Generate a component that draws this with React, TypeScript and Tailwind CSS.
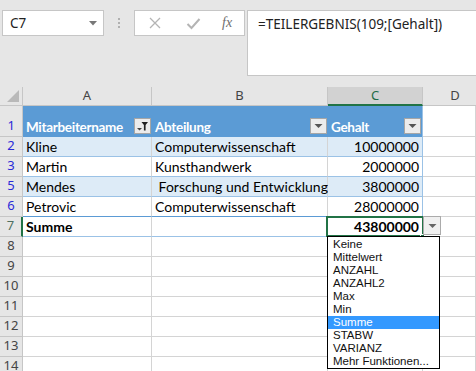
import React from 'react'

const rows = [
  { n: '2', a: 'Kline', b: 'Computerwissenschaft', c: '10000000', band: true },
  { n: '3', a: 'Martin', b: 'Kunsthandwerk', c: '2000000', band: false },
  { n: '5', a: 'Mendes', b: ' Forschung und Entwicklung', c: '3800000', band: true },
  { n: '6', a: 'Petrovic', b: 'Computerwissenschaft', c: '28000000', band: false },
]

const menu = ['Keine', 'Mittelwert', 'ANZAHL', 'ANZAHL2', 'Max', 'Min', 'Summe', 'STABW', 'VARIANZ', 'Mehr Funktionen...']

function FilterButton({ filtered }: { filtered?: boolean }) {
  return (
    <div className="w-[17px] h-[16px] bg-[#ececec] border border-[#a6a6a6] flex items-center justify-center shrink-0">
      {filtered ? (
        <svg width="13" height="12" viewBox="0 0 13 12">
          <path d="M1 8 H6 L3.5 10.5 Z" fill="#444" />
          <path d="M5.5 2 H12 L9.6 5 V10.5 H7.9 V5 Z" fill="#222" />
        </svg>
      ) : (
        <svg width="9" height="6" viewBox="0 0 9 6">
          <path d="M0.5 1 H8.5 L4.5 5 Z" fill="#555" />
        </svg>
      )}
    </div>
  )
}

function RowNum({ n, color = 'text-[#2a2ad8]', extra = '' }: { n: string; color?: string; extra?: string }) {
  return (
    <div
      className={`w-[23px] shrink-0 border-r border-b border-[#c6c6c6] bg-[#e6e6e6] flex items-end justify-center pb-[1px] text-[13px] font-['Noto_Sans',sans-serif] ${color} ${extra}`}
    >
      {n}
    </div>
  )
}

export default function App() {
  return (
    <div className="relative w-[476px] h-[371px] overflow-hidden bg-[#e6e6e6] font-['Lato',sans-serif] text-black">
      {/* formula bar area */}
      <div className="h-[87px] flex items-start pt-[10px] pl-[2px]">
        <div className="w-[102px] h-[26px] bg-white border border-[#c6c6c6] flex items-center justify-between pl-[7px] pr-[6px] font-['Noto_Sans',sans-serif] text-[13.5px] text-[#222]">
          <span>C7</span>
          <svg width="8" height="5" viewBox="0 0 8 5">
            <path d="M0 0 H8 L4 4.5 Z" fill="#777" />
          </svg>
        </div>
        <div className="w-[30px] h-[26px] flex flex-col items-center justify-center gap-[2px]">
          <span className="w-[2px] h-[2px] bg-[#b0b0b0]" />
          <span className="w-[2px] h-[2px] bg-[#b0b0b0]" />
          <span className="w-[2px] h-[2px] bg-[#b0b0b0]" />
        </div>
        <div className="w-[111px] h-[26px] bg-white border border-[#c6c6c6] flex items-center pl-[12px]">
          <svg width="14" height="14" viewBox="0 0 14 14" className="ml-[1px]">
            <path d="M2 2 L12 12 M12 2 L2 12" stroke="#b4b4b4" strokeWidth="1.3" />
          </svg>
          <svg width="15" height="13" viewBox="0 0 15 13" className="ml-[24px]">
            <path d="M1.5 7 L5.5 11 L13.5 2" stroke="#b4b4b4" strokeWidth="2" fill="none" />
          </svg>
          <span className="ml-[21px] font-['Liberation_Serif',serif] italic text-[14px] text-[#6e6e6e] leading-none">fx</span>
        </div>
        <div className="ml-[2px] flex-1 h-[66px] bg-white border border-[#c6c6c6] border-r-0 pl-[10px] pt-[3px] font-['Noto_Sans',sans-serif] text-[13.5px] text-[#222]">
          =TEILERGEBNIS(109;[Gehalt])
        </div>
      </div>

      {/* column headers */}
      <div className="flex h-[19px] font-['Noto_Sans',sans-serif] text-[13px] text-[#444]">
        <div className="w-[23px] shrink-0 border-r border-b border-[#c6c6c6] bg-[#e6e6e6] relative">
          <svg width="14" height="14" viewBox="0 0 14 14" className="absolute left-[6px] top-[2px]">
            <path d="M13 1 V13 H1 Z" fill="#b9b9b9" />
          </svg>
        </div>
        <div className="w-[129px] shrink-0 border-r border-b border-[#c6c6c6] flex items-center justify-center">A</div>
        <div className="w-[176px] shrink-0 border-r border-b border-[#c6c6c6] flex items-center justify-center">B</div>
        <div className="w-[95px] shrink-0 border-r border-[#c6c6c6] border-b-2 border-b-[#217346] bg-[#d2d2d2] flex items-center justify-center text-[#1f6b47]">
          C
        </div>
        <div className="flex-1 border-b border-[#c6c6c6] flex items-center justify-center pl-[11px]">D</div>
      </div>

      {/* row 1 : table header */}
      <div className="flex h-[31px] text-[13.5px] tracking-[-0.3px]">
        <RowNum n="1" />
        <div className="w-[129px] shrink-0 bg-[#5b9bd5] flex items-end justify-between pl-[3px] pr-[1px] pb-[3px] font-bold text-white">
          <span className="leading-[18px] mb-[-2px]">Mitarbeitername</span>
          <FilterButton filtered />
        </div>
        <div className="w-[176px] shrink-0 bg-[#5b9bd5] flex items-end justify-between pl-[3px] pr-[1px] pb-[3px] font-bold text-white">
          <span className="leading-[18px] mb-[-2px]">Abteilung</span>
          <FilterButton />
        </div>
        <div className="w-[95px] shrink-0 bg-[#5b9bd5] border-r border-[#9bc2e6] flex items-end justify-between pl-[3px] pr-[1px] pb-[3px] font-bold text-white">
          <span className="leading-[18px] mb-[-2px]">Gehalt</span>
          <FilterButton />
        </div>
        <div className="flex-1 bg-white border-b border-r border-[#d4d4d4]" />
      </div>

      {/* data rows */}
      {rows.map((r, i) => {
        const bottom = i === rows.length - 1 ? 'border-b-[#5b9bd5]' : 'border-b-[#9bc2e6]'
        const bg = r.band ? 'bg-[#ddebf7]' : 'bg-white'
        return (
          <div key={r.n} className="flex h-[20px] text-[14px]">
            <RowNum n={r.n} />
            <div className={`w-[129px] shrink-0 ${bg} border-b border-r border-r-[#d4d4d4] ${bottom} pl-[3px] flex items-end leading-[19px]`}>
              {r.a}
            </div>
            <div className={`w-[176px] shrink-0 ${bg} border-b border-r border-r-[#d4d4d4] ${bottom} pl-[3px] flex items-end leading-[19px] whitespace-pre`}>
              {r.b}
            </div>
            <div className={`w-[95px] shrink-0 ${bg} border-b border-r border-r-[#9bc2e6] ${bottom} pr-[3px] flex items-end justify-end leading-[19px]`}>
              {r.c}
            </div>
            <div className="flex-1 bg-white border-b border-r border-[#d4d4d4]" />
          </div>
        )
      })}

      {/* row 7 : totals */}
      <div className="flex h-[20px] text-[14px]">
        <RowNum n="7" color="text-[#4f7060]" extra="bg-[#d2d2d2] border-r-2 border-r-[#217346]" />
        <div className="w-[129px] shrink-0 bg-white border-b border-r border-r-[#d4d4d4] border-b-[#9bc2e6] pl-[3px] flex items-end leading-[19px] font-bold">
          Summe
        </div>
        <div className="w-[176px] shrink-0 bg-white border-b border-r border-r-[#d4d4d4] border-b-[#9bc2e6]" />
        <div className="relative w-[95px] shrink-0 bg-white border-b border-r border-r-[#9bc2e6] border-b-[#9bc2e6] pr-[3px] flex items-end justify-end leading-[19px] font-bold">
          43800000
          <div className="absolute -left-[2px] -top-[1px] -right-[2px] -bottom-[1px] border-2 border-[#217346]" />
          <div className="absolute -right-[3px] -bottom-[3px] w-[5px] h-[5px] bg-[#217346] border border-white" />
        </div>
        <div className="flex-1 bg-white border-b border-r border-[#d4d4d4]" />
      </div>

      {/* empty rows */}
      {['8', '9', '10', '11', '12', '13', '14'].map((n) => (
        <div key={n} className="flex h-[20px]">
          <RowNum n={n} color="text-[#444]" />
          <div className="w-[129px] shrink-0 bg-white border-b border-r border-[#d4d4d4]" />
          <div className="w-[176px] shrink-0 bg-white border-b border-r border-[#d4d4d4]" />
          <div className="w-[95px] shrink-0 bg-white border-b border-r border-[#d4d4d4]" />
          <div className="flex-1 bg-white border-b border-r border-[#d4d4d4]" />
        </div>
      ))}

      {/* totals dropdown button */}
      <div className="absolute left-[423px] top-[216px] w-[18px] h-[19px] bg-[#f0f0f0] border border-[#ababab] flex items-center justify-center">
        <svg width="9" height="6" viewBox="0 0 9 6">
          <path d="M0.5 1 H8.5 L4.5 5 Z" fill="#666" />
        </svg>
      </div>

      {/* totals function list */}
      <div className="absolute left-[327px] top-[236px] w-[113px] h-[133px] bg-white border border-black py-[1px] font-['Liberation_Sans',Arial,sans-serif] text-[11.5px] text-[#111]">
        {menu.map((m) => (
          <div
            key={m}
            className={`h-[13px] leading-[13px] pl-[5px] whitespace-nowrap ${m === 'Summe' ? 'bg-[#3399ff] text-white' : ''}`}
          >
            {m}
          </div>
        ))}
      </div>
    </div>
  )
}
